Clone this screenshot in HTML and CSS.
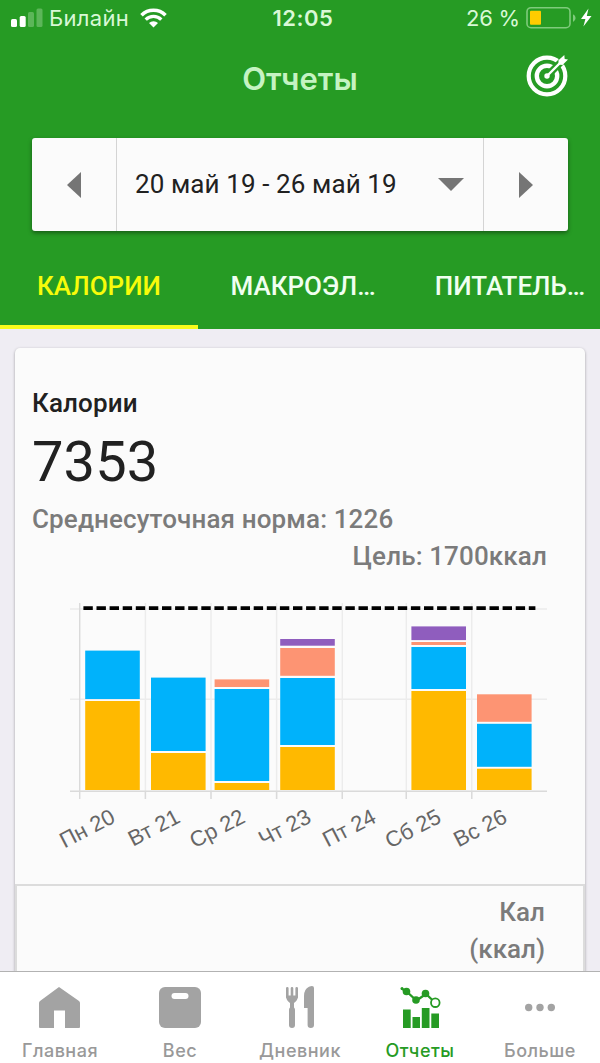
FILE: index.html
```html
<!DOCTYPE html>
<html lang="ru">
<head>
  <meta charset="UTF-8">
  <title>Отчеты</title>
  <meta name="viewport" content="width=device-width, initial-scale=1.0">
  <link rel="stylesheet" href="styles.css">
</head>
<body>
  <header class="header">
    <div class="status-bar">
      <div class="status-left">
        <svg class="signal" width="32" height="20" viewBox="0 0 32 20">
          <rect x="0" y="11" width="6" height="8" rx="1.5" fill="#fff"/>
          <rect x="8.7" y="8" width="6" height="11" rx="1.5" fill="#fff"/>
          <rect x="17" y="4" width="6" height="15" rx="1.5" fill="#5cb659"/>
          <rect x="25.5" y="0.5" width="6" height="18.5" rx="1.5" fill="#5cb659"/>
        </svg>
        <span class="carrier">Билайн</span>
        <svg class="wifi" width="27" height="20" viewBox="0 0 27 20">
          <path d="M1.5 7.2a17 17 0 0 1 24 0" fill="none" stroke="#fff" stroke-width="3.6"/>
          <path d="M5.7 11.6a11 11 0 0 1 15.6 0" fill="none" stroke="#fff" stroke-width="3.3"/>
          <path d="M9 15a6.4 6.4 0 0 1 9 0l-4.5 4.6z" fill="#fff"/>
        </svg>
      </div>
      <span class="clock">12:05</span>
      <div class="status-right">
        <span class="percent">26 %</span>
        <svg width="66" height="24" viewBox="0 0 66 24">
          <rect x="1" y="1.7" width="43" height="20" rx="4" fill="none" stroke="#7fcb7c" stroke-width="1.6"/>
          <rect x="4" y="4.7" width="11" height="14" rx="1" fill="#ffcc00"/>
          <path d="M47 8.3q2.6 1 2.6 3.8t-2.6 3.800z" fill="#7fcb7c"/>
          <path d="M62.5 2.500 55 13h4.400l-2 7.400L65.500 10h-4.700z" fill="#fff"/>
        </svg>
      </div>
    </div>

    <div class="title-bar">
      <h1>Отчеты</h1>
      <button class="goal-btn" aria-label="Цель">
        <svg width="44" height="44" viewBox="0 0 44 44">
          <circle cx="22" cy="22" r="18.3" fill="none" stroke="#fff" stroke-width="4.2"/>
          <circle cx="22" cy="22" r="10.2" fill="none" stroke="#fff" stroke-width="4.4"/>
          <path d="M22.500 21.500 40 4" stroke="#269b24" stroke-width="7"/>
          <circle cx="22" cy="22" r="2.700" fill="#fff"/>
          <path d="M22 22 36 8" stroke="#fff" stroke-width="2.400"/>
          <path d="M33.500 10.500V6.300L39.300 1l.4 4 3.300.6-5.500 5.400z" fill="#fff"/>
        </svg>
      </button>
    </div>

    <div class="date-picker">
      <button class="date-arrow" aria-label="Назад">
        <svg width="14" height="26" viewBox="0 0 14 26"><path d="M14 0v26L0 13z" fill="#757575"/></svg>
      </button>
      <button class="date-range">
        <span>20 май 19 - 26 май 19</span>
        <svg width="26" height="13" viewBox="0 0 26 13"><path d="M0 0h26L13 13z" fill="#757575"/></svg>
      </button>
      <button class="date-arrow" aria-label="Вперед">
        <svg width="14" height="26" viewBox="0 0 14 26"><path d="M0 0v26l14-13z" fill="#757575"/></svg>
      </button>
    </div>

    <nav class="tabs">
      <a class="tab active">КАЛОРИИ</a>
      <a class="tab">МАКРОЭЛ…</a>
      <a class="tab">ПИТАТЕЛЬ…</a>
    </nav>
  </header>

  <main class="content">
    <section class="card">
      <div class="summary">
        <h2>Калории</h2>
        <div class="total">7353</div>
        <div class="average">Среднесуточная норма: 1226</div>
        <div class="goal">Цель: 1700ккал</div>
      </div>

      <svg class="chart" width="570" height="294" viewBox="0 0 570 294">
        <!-- grid -->
        <g class="grid">
          <path d="M130.4 13v196M196 13v196M261.6 13v196M327.3 13v196M391.3 13v196M456.7 13v196"/>
          <path d="M55 19h477M55 109.2h477"/>
        </g>
        <path class="axis" d="M64.7 13v196M55 201.2h477M130.4 201v8M196 201v8M261.6 201v8M327.3 201v8M391.3 201v8M456.7 201v8"/>

        <!-- bars -->
        <g class="breakfast">
          <rect x="70.2" y="111" width="54.6" height="89"/>
          <rect x="136" y="163" width="54.6" height="37"/>
          <rect x="199.6" y="193" width="54.6" height="7"/>
          <rect x="265.2" y="157" width="54.6" height="43"/>
          <rect x="396.4" y="101" width="54.6" height="99"/>
          <rect x="462" y="178.7" width="54.6" height="21.3"/>
        </g>
        <g class="lunch">
          <rect x="70.2" y="60.6" width="54.6" height="48.4"/>
          <rect x="136" y="87.6" width="54.6" height="73.4"/>
          <rect x="199.6" y="99" width="54.6" height="92"/>
          <rect x="265.2" y="88" width="54.6" height="67"/>
          <rect x="396.4" y="57" width="54.6" height="42"/>
          <rect x="462" y="133.8" width="54.6" height="43"/>
        </g>
        <g class="dinner">
          <rect x="199.6" y="89.4" width="54.6" height="7.6"/>
          <rect x="265.2" y="58" width="54.6" height="27.8"/>
          <rect x="396.4" y="52" width="54.6" height="3"/>
          <rect x="462" y="104.3" width="54.6" height="27.5"/>
        </g>
        <g class="snack">
          <rect x="265.2" y="49" width="54.6" height="6.7"/>
          <rect x="396.4" y="36.4" width="54.6" height="13.7"/>
        </g>

        <path class="goal-line" d="M68.4 18.2h452"/>

        <!-- days -->
        <g class="days">
          <text transform="translate(101.5 231.500) rotate(-27.500)">Пн 20</text>
          <text transform="translate(166.500 231.500) rotate(-27.500)">Вт 21</text>
          <text transform="translate(231.500 231.500) rotate(-27.500)">Ср 22</text>
          <text transform="translate(297.500 231.500) rotate(-27.500)">Чт 23</text>
          <text transform="translate(362.500 231.500) rotate(-27.500)">Пт 24</text>
          <text transform="translate(427.500 231.500) rotate(-27.500)">Сб 25</text>
          <text transform="translate(493.500 231.500) rotate(-27.500)">Вс 26</text>
        </g>
      </svg>

      <div class="table">
        <div class="table-head">Кал<br>(ккал)</div>
      </div>
    </section>
  </main>

  <nav class="bottom-bar">
    <a class="nav-item">
      <svg width="44" height="44" viewBox="0 0 44 44">
        <path d="M21 1 41 15q1 .8 1 2v24q0 1-1 1H27V24.500H16V42H2q-1 0-1-1V17q0-1.200 1-2z" fill="#a3a3a3"/>
      </svg>
      <span>Главная</span>
    </a>
    <a class="nav-item">
      <svg width="44" height="44" viewBox="0 0 44 44">
        <rect x="1" y="1" width="42" height="41" rx="6" fill="#a3a3a3"/>
        <rect x="13.5" y="7" width="17" height="6" rx="3" fill="#fff"/>
      </svg>
      <span>Вес</span>
    </a>
    <a class="nav-item">
      <svg width="44" height="44" viewBox="0 0 44 44">
        <path d="M9.3 2.300V11M14 2.300V14M18.700 2.300V11" fill="none" stroke="#a3a3a3" stroke-width="2.600" stroke-linecap="round"/>
        <path d="M8 9.500h12q0 5-4 7.500V23h-4v-6q-4-2.500-4-7.500z" fill="#a3a3a3"/>
        <rect x="11" y="21" width="6" height="21" rx="3" fill="#a3a3a3"/>
        <path d="M36 2V39q0 3-3.200 3t-3.200-3V22H26V10q0-7 5-9.300Q36-1 36 2z" fill="#a3a3a3"/>
      </svg>
      <span>Дневник</span>
    </a>
    <a class="nav-item active">
      <svg width="44" height="44" viewBox="0 0 44 44">
        <path d="M3.5 2.500 9 6l9.500 8.500L28 8l9.500 9" fill="none" stroke="#269b24" stroke-width="2.200"/>
        <circle cx="4" cy="2.500" r="1.500" fill="#269b24"/>
        <circle cx="8.500" cy="5.500" r="3.800" fill="#269b24"/>
        <circle cx="18" cy="14" r="3.800" fill="#269b24"/>
        <circle cx="27.500" cy="7.500" r="3.800" fill="#269b24"/>
        <circle cx="37.300" cy="16.700" r="4.300" fill="#fff" stroke="#269b24" stroke-width="1.800"/>
        <path d="M5 23.500h7.700V42H5zM14.500 31h7.500v11h-7.500zM23.800 22h7.700v20h-7.700zM33.300 27.500H41V42h-7.700z" fill="#269b24"/>
      </svg>
      <span>Отчеты</span>
    </a>
    <a class="nav-item">
      <svg width="44" height="44" viewBox="0 0 44 44" fill="#a3a3a3">
        <circle cx="10.7" cy="21.500" r="3.700"/>
        <circle cx="22" cy="21.500" r="3.700"/>
        <circle cx="33.300" cy="21.500" r="3.700"/>
      </svg>
      <span>Больше</span>
    </a>
  </nav>
</body>
</html>
```
FILE: styles.css
```css
* {
  box-sizing: border-box;
}

body {
  margin: 0;
  height: 1063px;
  display: flex;
  flex-direction: column;
  overflow: hidden;
  font-family: Roboto, sans-serif;
  background: #efedf3;
  color: #212121;
}

button {
  border: none;
  background: none;
  padding: 0;
  font: inherit;
  color: inherit;
}

svg {
  display: block;
  flex-shrink: 0;
}

/* === Header === */
.header {
  height: 329px;
  flex-shrink: 0;
  background: #269b24;
}

.status-bar {
  height: 36px;
  display: grid;
  grid-template-columns: 1fr auto 1fr;
  align-items: center;
  padding: 0 8px 0 11px;
  font-family: Inter, sans-serif;
  font-size: 22px;
  color: #d9f8d6;
}

.status-left,
.status-right {
  display: flex;
  align-items: center;
}

.status-right {
  justify-content: flex-end;
}

.carrier {
  margin: 0 11px 0 6px;
  letter-spacing: 0.3px;
}

.clock {
  padding-left: 3px;
  font-weight: 600;
  letter-spacing: 0.5px;
}

.percent {
  margin-right: 6px;
  letter-spacing: -0.2px;
}

.title-bar {
  height: 102px;
  display: grid;
  grid-template-columns: 1fr auto 1fr;
  align-items: start;
  padding: 18px 31px 0;
}

.title-bar h1 {
  grid-column: 2;
  margin: 5px 0 0;
  font-family: Inter, sans-serif;
  font-size: 31px;
  line-height: 40px;
  font-weight: 600;
  color: #c5f3c2;
}

.goal-btn {
  justify-self: end;
}

.date-picker {
  height: 93px;
  margin: 0 32px;
  display: flex;
  background: #fbfbfb;
  border-radius: 3px;
  box-shadow: 0 2px 4px rgba(0, 0, 0, 0.4);
  font-size: 26px;
}

.date-arrow {
  width: 84px;
  display: flex;
  align-items: center;
  justify-content: center;
}

.date-range {
  flex: 1;
  display: flex;
  align-items: center;
  justify-content: space-between;
  padding: 0 19px 0 18px;
  border-left: 1px solid #d4d4d4;
  border-right: 1px solid #d4d4d4;
}

.date-range span {
  padding-bottom: 2px;
  letter-spacing: 0.1px;
}

.tabs {
  height: 98px;
  display: grid;
  grid-template-columns: 198px 210px 204px;
  overflow: hidden;
}

.tab {
  padding-top: 40px;
  font-size: 26px;
  line-height: 30px;
  font-weight: 500;
  text-align: center;
  color: #f0fff0;
}

.tab.active {
  color: #f8fb0a;
  border-bottom: 4px solid #f8fb1c;
}

/* === Report card === */
.content {
  flex: 1;
  min-height: 0;
  padding: 19px 15px 0;
  overflow: hidden;
}

.card {
  height: 700px;
  background: #fbfbfb;
  border-radius: 5px;
  box-shadow: 0 1px 3px rgba(0, 0, 0, 0.35);
}

.summary {
  height: 242px;
  padding: 39px 38px 0 17px;
  font-size: 26px;
  line-height: 32px;
  font-weight: 500;
  letter-spacing: 0.13px;
  color: #7b7b7b;
}

.summary h2 {
  margin: 0;
  font-size: 26px;
  font-weight: 500;
  color: #212121;
}

.total {
  margin-top: 10px;
  font-size: 56px;
  line-height: 66px;
  font-weight: 400;
  color: #212121;
}

.average {
  margin-top: 8px;
}

.goal {
  margin-top: 5px;
  text-align: right;
}

.grid {
  fill: none;
  stroke: #ececec;
  stroke-width: 1.4;
}

.axis {
  fill: none;
  stroke: #dadada;
  stroke-width: 1.4;
}

.breakfast { fill: #ffb900; }
.lunch { fill: #00b2fb; }
.dinner { fill: #fd9473; }
.snack { fill: #8f5dbe; }

.goal-line {
  stroke: #000;
  stroke-width: 3.8;
  stroke-dasharray: 9.4 3.7;
}

.days {
  font-family: "Liberation Sans", sans-serif;
  font-size: 22px;
  text-anchor: end;
  fill: #666;
}

.table {
  height: 120px;
  border: 2px solid #dcdcdc;
}

.table-head {
  padding: 8px 38px 0 0;
  font-size: 26px;
  line-height: 37px;
  font-weight: 500;
  text-align: right;
  color: #7b7b7b;
}

/* === Bottom bar === */
.bottom-bar {
  height: 92px;
  flex-shrink: 0;
  display: grid;
  grid-template-columns: repeat(5, 1fr);
  background: #fff;
  border-top: 1px solid #b2b2b2;
}

.nav-item {
  display: flex;
  flex-direction: column;
  align-items: center;
  padding-top: 14px;
  font-family: Inter, sans-serif;
  font-size: 18px;
  line-height: 22px;
  font-weight: 500;
  letter-spacing: 0.5px;
  color: #999;
}

.nav-item span {
  margin-top: 10px;
}

.nav-item.active {
  color: #269b24;
}
```
